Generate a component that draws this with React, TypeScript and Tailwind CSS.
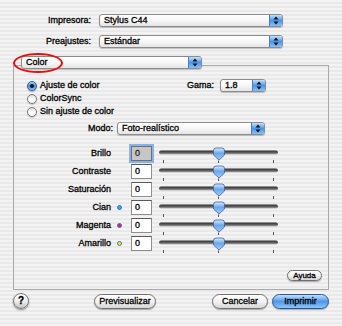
import React from "react";

const font = "font-['Liberation_Sans',Arial,sans-serif]";

function Arrows() {
  return (
    <svg width="6" height="9" viewBox="0 0 6 9">
      <path d="M3 0.5 L5.5 3.5 H0.5 Z" fill="#111" />
      <path d="M3 8.5 L5.5 5.5 H0.5 Z" fill="#111" />
    </svg>
  );
}

function Popup({ cls, text }: { cls: string; text: string }) {
  return (
    <div
      className={`relative z-10 flex items-stretch rounded-[3px] border border-[#8c8c8c] bg-gradient-to-b from-white via-[#f7f7f7] to-[#e4e4e4] shadow-[0_1px_1px_rgba(0,0,0,0.22)] ${cls}`}
    >
      <div className="flex flex-1 items-center pl-[4px] text-[9px] leading-none text-black">{text}</div>
      <div className="flex w-[13px] items-center justify-center rounded-r-[2px] border-l border-[#4a7cc4] bg-gradient-to-b from-[#c4e0fc] via-[#4a95ea] to-[#86c0f7]">
        <Arrows />
      </div>
    </div>
  );
}

function Radio({ on, label }: { on?: boolean; label: string }) {
  return (
    <div className="flex h-[13px] items-center">
      {on ? (
        <div className="flex h-[10px] w-[10px] items-center justify-center rounded-full border border-[#2f5fae] bg-gradient-to-b from-[#a8cff7] via-[#4a90e2] to-[#8fc4f7] shadow-[0_1px_1px_rgba(0,0,0,0.3)]">
          <div className="h-[4px] w-[4px] rounded-full bg-[#111]" />
        </div>
      ) : (
        <div className="h-[10px] w-[10px] rounded-full border border-[#7a7a7a] bg-gradient-to-b from-[#d8d8d8] via-white to-[#f4f4f4] shadow-[0_1px_1px_rgba(0,0,0,0.2)]" />
      )}
      <span className="ml-[3px] text-[9px] leading-none text-black">{label}</span>
    </div>
  );
}

function Slider({ id }: { id: string }) {
  return (
    <svg width="124" height="18" viewBox="0 0 124 18" overflow="visible" className="overflow-visible">
      <defs>
        <linearGradient id={`t${id}`} x1="0" y1="0" x2="0" y2="1">
          <stop offset="0" stopColor="#2e2e2e" />
          <stop offset="0.6" stopColor="#666" />
          <stop offset="1" stopColor="#b5b5b5" />
        </linearGradient>
        <linearGradient id={`h${id}`} x1="0" y1="0" x2="0" y2="1">
          <stop offset="0" stopColor="#dcebfc" />
          <stop offset="0.45" stopColor="#6aa6ea" />
          <stop offset="1" stopColor="#a9d0f8" />
        </linearGradient>
      </defs>
      <rect x="2" y="6.5" width="119" height="4" rx="2" fill={`url(#t${id})`} />
      <rect x="6" y="16" width="1" height="3" fill="#555" />
      <rect x="61" y="16.5" width="1" height="2.5" fill="#555" />
      <rect x="116" y="16" width="1" height="3" fill="#555" />
      <path
        d="M56.5 6.5 Q56.5 4 59 4 H65 Q67.5 4 67.5 6.5 V11 L62 16 L56.5 11 Z"
        fill={`url(#h${id})`}
        stroke="#3a62a0"
        strokeWidth="0.8"
      />
    </svg>
  );
}

function SliderRow({ label, dot, focused, id }: { label: string; dot?: string; focused?: boolean; id: string }) {
  return (
    <div className="flex h-[18px] items-center">
      <div className="w-[97px] text-right text-[9px] leading-none text-black">{label}</div>
      <div className="flex w-[20px] items-center pl-[6px]">
        {dot && <div className={`h-[5px] w-[5px] rounded-full border border-[#4a6fa8] ${dot}`} />}
      </div>
      {focused ? (
        <div className="flex h-[15px] w-[21px] items-center border border-[#6f6f6f] bg-[#c6c6c6] pl-[3px] text-[9px] leading-none text-[#555] shadow-[0_0_0_2px_#86b4ea]">
          0
        </div>
      ) : (
        <div className="flex h-[15px] w-[21px] items-center border border-[#8e8e8e] border-t-[#5a5a5a] bg-white pl-[3px] text-[9px] leading-none text-black">
          0
        </div>
      )}
      <div className="ml-[5px]">
        <Slider id={id} />
      </div>
    </div>
  );
}

function Pill({ cls, text, blue }: { cls: string; text: string; blue?: boolean }) {
  return (
    <div
      className={`flex items-center justify-center rounded-full border text-[9px] leading-none text-black shadow-[0_1px_1px_rgba(0,0,0,0.3)] ${
        blue
          ? "border-[#24559e] bg-gradient-to-b from-[#c3e0fc] via-[#4f97e6] to-[#8cc6f8]"
          : "border-[#707070] bg-gradient-to-b from-white via-[#f2f2f2] to-[#d6d6d6]"
      } ${cls}`}
    >
      {text}
    </div>
  );
}

export default function App() {
  return (
    <div
      className={`relative h-[326px] w-[342px] overflow-hidden bg-[repeating-linear-gradient(180deg,#f3f3f3_0px,#f3f3f3_2px,#e9e9e9_2px,#e9e9e9_4px)] ${font} [-webkit-text-stroke:0.3px_#000]`}
    >
      <div className="flex flex-col pt-[14px]">
        <div className="flex h-[13px] items-center">
          <div className="w-[91px] text-right text-[9px] leading-none">Impresora:</div>
          <Popup cls="ml-[8px] h-[13px] w-[184px]" text="Stylus C44" />
        </div>
        <div className="mt-[8px] flex h-[13px] items-center">
          <div className="w-[91px] text-right text-[9px] leading-none">Preajustes:</div>
          <Popup cls="ml-[8px] h-[13px] w-[184px]" text="Estándar" />
        </div>
        <div className="mt-[8px] pl-[21px]">
          <Popup cls="h-[13px] w-[181px]" text="Color" />
        </div>
        <div className="ml-[13px] -mt-[4px] flex h-[225px] w-[316px] flex-col border border-[#a9a9a9]">
          <div className="flex pl-[13px] pr-[62px] pt-[13px]">
            <div className="flex flex-col">
              <Radio on label="Ajuste de color" />
              <Radio label="ColorSync" />
              <Radio label="Sin ajuste de color" />
            </div>
            <div className="ml-auto flex h-[13px] items-center">
              <span className="text-[9px] leading-none">Gama:</span>
              <Popup cls="ml-[6px] h-[13px] w-[46px]" text="1.8" />
            </div>
          </div>
          <div className="mt-[4px] flex h-[13px] items-center">
            <div className="w-[99px] text-right text-[9px] leading-none">Modo:</div>
            <Popup cls="ml-[4px] h-[13px] w-[148px]" text="Foto-realístico" />
          </div>
          <div className="mt-[9px] flex flex-col">
            <SliderRow id="a" label="Brillo" focused />
            <SliderRow id="b" label="Contraste" />
            <SliderRow id="c" label="Saturación" />
            <SliderRow id="d" label="Cian" dot="bg-[#18b4f0]" />
            <SliderRow id="e" label="Magenta" dot="bg-[#e0157f]" />
            <SliderRow id="f" label="Amarillo" dot="bg-[#f2ec1a]" />
          </div>
          <div className="mt-auto flex justify-end pb-[8px] pr-[6px]">
            <Pill cls="h-[11px] w-[35px] !text-[8px]" text="Ayuda" />
          </div>
        </div>
        <div className="mt-[3px] flex items-center pl-[13px] pr-[13px]">
          <div className="flex h-[16px] w-[16px] items-center justify-center rounded-full border border-[#7a7a7a] bg-gradient-to-b from-white via-[#eeeeee] to-[#c4c4c4] text-[10px] font-bold leading-none shadow-[0_1px_2px_rgba(0,0,0,0.45)]">
            ?
          </div>
          <Pill cls="ml-[65px] h-[15px] w-[62px]" text="Previsualizar" />
          <Pill cls="ml-auto h-[15px] w-[56px]" text="Cancelar" />
          <Pill cls="ml-[4px] h-[15px] w-[57px]" text="Imprimir" blue />
        </div>
      </div>
      <div className="pointer-events-none absolute left-[13px] top-[53px] z-20 h-[20px] w-[50px] rounded-[50%] border-2 border-[#e40f0f]" />
    </div>
  );
}
